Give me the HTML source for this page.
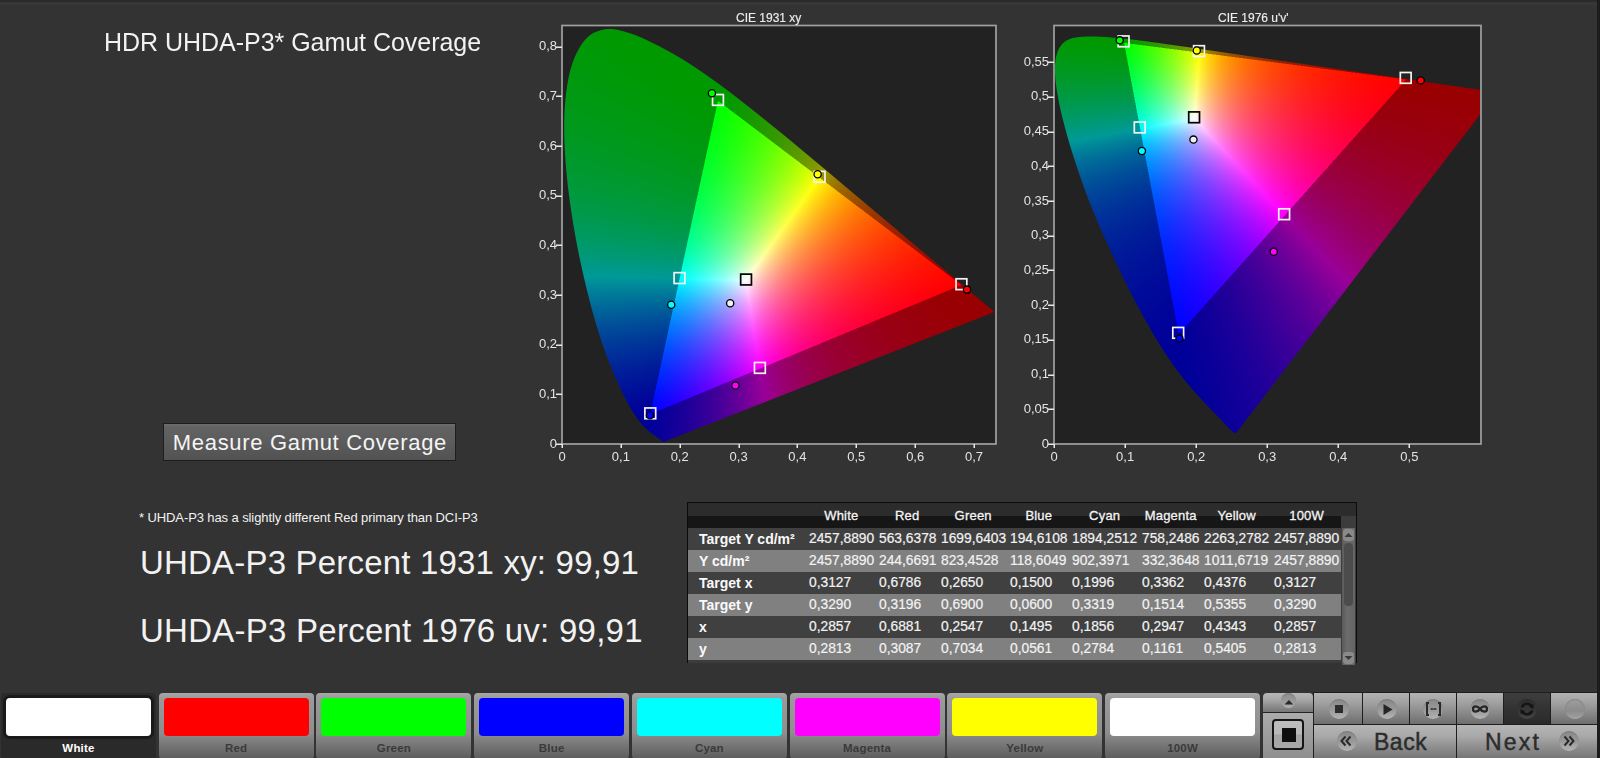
<!DOCTYPE html>
<html><head><meta charset="utf-8">
<style>
html,body{margin:0;padding:0;}
body{width:1600px;height:758px;overflow:hidden;background:#333333;position:relative;font-family:"Liberation Sans",sans-serif;color:#f2f2f2;}
.a{position:absolute;white-space:nowrap;}
#cv{position:absolute;left:0;top:0;}
.title{left:104px;top:26.5px;font-size:25px;line-height:30px;letter-spacing:-0.03px;}
.btn{left:163px;top:423px;width:291px;height:36px;border:1px solid #1e1e1e;background:linear-gradient(#6e6e6e 0px,#636363 3px,#5b5b5b 55%,#525252);}
.btn span{position:absolute;left:8.8px;top:6.8px;font-size:22px;line-height:24px;letter-spacing:0.68px;color:#f4f4f4;}
.note{left:139px;top:509.5px;font-size:13px;line-height:15px;letter-spacing:-0.1px;}
.big{left:140px;font-size:33px;line-height:36px;}
.ct{font-size:12px;line-height:14px;color:#ececec;-webkit-text-stroke:0.15px #ececec;}
.yl{font-size:13px;line-height:14px;color:#e4e4e4;text-align:right;width:40px;}
.xl{font-size:13px;line-height:14px;color:#e4e4e4;text-align:center;width:40px;}

.tbl{left:687px;top:502px;width:668px;height:160px;border:1px solid #0c0c0c;border-bottom:none;background:#3c3c3c;}
.thd1{position:absolute;left:0;top:0;width:668px;height:13px;background:#2c2c2c;}
.thd2{position:absolute;left:0;top:13px;width:653px;height:12px;background:#161616;}
.row{position:absolute;left:0;width:653px;height:22px;}
.rd{background:#404040;}
.rl{background:#808080;}
.hd{font-size:13px;line-height:16px;color:#f4f4f4;text-align:center;width:80px;letter-spacing:0.2px;-webkit-text-stroke:0.3px #f4f4f4;}
.cell{font-size:13.8px;line-height:22px;color:#f2f2f2;-webkit-text-stroke:0.2px #f2f2f2;}
.lab{font-size:14px;line-height:22px;color:#fafafa;font-weight:bold;left:11px;}
.sb{position:absolute;left:654px;top:25px;width:13px;height:137px;background:linear-gradient(90deg,#5a5a5a,#6c6c6c 40%,#646464);}
.sbu{position:absolute;left:1px;width:11px;height:12px;background:#8a8a8a;border-radius:3px;}
.sbt{position:absolute;left:2px;top:15px;width:9px;height:63px;background:#4c4c4c;border-radius:4px;}
.sw{top:693px;width:155px;height:66px;border-radius:4px;background:linear-gradient(#a6a6a6 0px,#9a9a9a 6px,#8e8e8e 40px,#7a7a7a 50px,#5c5c5c 66px);}
.sw .c{position:absolute;left:5px;top:5px;width:145px;height:38px;border-radius:4px;}
.sw .t{position:absolute;left:0;top:48px;width:155px;text-align:center;font-size:11.5px;line-height:14px;font-weight:bold;color:#3a3a3a;letter-spacing:0.2px;}
.sel{background:#2a2a2a;}
.sel .c{box-shadow:0 0 0 3px #1a1a1a;}
.sel .t{color:#ffffff;}

.cp{position:absolute;}
.g1{background:linear-gradient(#b2b2b2,#a2a2a2 30%,#8c8c8c 60%,#6e6e6e);}
.g2{background:linear-gradient(#b6b6b6,#a8a8a8 35%,#909090 65%,#767676);}
.g3{background:linear-gradient(#3e3e3e,#333333 50%,#2a2a2a);}
.ic{position:absolute;width:20px;height:20px;border-radius:50%;background:linear-gradient(#888 0%,#9a9a9a 55%,#b4b4b4 100%);box-shadow:inset 0 1px 1px rgba(0,0,0,0.12);}
.bt{position:absolute;font-size:23px;line-height:24px;color:#2c2c2c;-webkit-text-stroke:0.45px #2c2c2c;}
</style></head><body>
<canvas id="cv" width="1600" height="480"></canvas>
<div class="a" style="left:0;top:0;width:1600px;height:2px;background:#2a2a2a"></div><div class="a" style="left:0;top:2px;width:1600px;height:3px;background:#373737"></div>
<div class="a title">HDR UHDA-P3* Gamut Coverage</div>
<div class="a btn"><span>Measure Gamut Coverage</span></div>
<div class="a note">* UHDA-P3 has a slightly different Red primary than DCI-P3</div>
<div class="a big" style="top:544.5px;letter-spacing:0.19px">UHDA-P3 Percent 1931 xy: 99,91</div>
<div class="a big" style="top:613px;letter-spacing:0.25px">UHDA-P3 Percent 1976 uv: 99,91</div>
<div id="labels">
<div class="a ct" style="left:736px;top:11px">CIE 1931 xy</div>
<div class="a ct" style="left:1218px;top:11px">CIE 1976 u'v'</div>
<div class="a yl" style="left:517px;top:436.5px">0</div>
<div class="a yl" style="left:517px;top:386.9px">0,1</div>
<div class="a yl" style="left:517px;top:337.2px">0,2</div>
<div class="a yl" style="left:517px;top:287.6px">0,3</div>
<div class="a yl" style="left:517px;top:237.9px">0,4</div>
<div class="a yl" style="left:517px;top:188.2px">0,5</div>
<div class="a yl" style="left:517px;top:138.6px">0,6</div>
<div class="a yl" style="left:517px;top:89.0px">0,7</div>
<div class="a yl" style="left:517px;top:39.3px">0,8</div>
<div class="a xl" style="left:542.0px;top:450px">0</div>
<div class="a xl" style="left:600.9px;top:450px">0,1</div>
<div class="a xl" style="left:659.7px;top:450px">0,2</div>
<div class="a xl" style="left:718.6px;top:450px">0,3</div>
<div class="a xl" style="left:777.4px;top:450px">0,4</div>
<div class="a xl" style="left:836.3px;top:450px">0,5</div>
<div class="a xl" style="left:895.2px;top:450px">0,6</div>
<div class="a xl" style="left:954.0px;top:450px">0,7</div>
<div class="a yl" style="left:1009px;top:436.5px">0</div>
<div class="a yl" style="left:1009px;top:401.8px">0,05</div>
<div class="a yl" style="left:1009px;top:367.1px">0,1</div>
<div class="a yl" style="left:1009px;top:332.3px">0,15</div>
<div class="a yl" style="left:1009px;top:297.6px">0,2</div>
<div class="a yl" style="left:1009px;top:262.9px">0,25</div>
<div class="a yl" style="left:1009px;top:228.2px">0,3</div>
<div class="a yl" style="left:1009px;top:193.5px">0,35</div>
<div class="a yl" style="left:1009px;top:158.7px">0,4</div>
<div class="a yl" style="left:1009px;top:124.0px">0,45</div>
<div class="a yl" style="left:1009px;top:89.3px">0,5</div>
<div class="a yl" style="left:1009px;top:54.6px">0,55</div>
<div class="a xl" style="left:1034.0px;top:450px">0</div>
<div class="a xl" style="left:1105.1px;top:450px">0,1</div>
<div class="a xl" style="left:1176.2px;top:450px">0,2</div>
<div class="a xl" style="left:1247.2px;top:450px">0,3</div>
<div class="a xl" style="left:1318.3px;top:450px">0,4</div>
<div class="a xl" style="left:1389.4px;top:450px">0,5</div>
</div>
<div class="a tbl">
<div class="thd1"></div><div class="thd2"></div>
<div class="a hd" style="left:113.3px;top:5px">White</div>
<div class="a hd" style="left:179.2px;top:5px">Red</div>
<div class="a hd" style="left:245.2px;top:5px">Green</div>
<div class="a hd" style="left:310.8px;top:5px">Blue</div>
<div class="a hd" style="left:376.7px;top:5px">Cyan</div>
<div class="a hd" style="left:442.7px;top:5px">Magenta</div>
<div class="a hd" style="left:508.7px;top:5px">Yellow</div>
<div class="a hd" style="left:578.6px;top:5px">100W</div>
<div class="row rd" style="top:25px">
<div class="a lab" style="top:0">Target Y cd/m&sup2;</div>
<div class="a cell" style="left:121px;top:0">2457,8890</div>
<div class="a cell" style="left:191px;top:0">563,6378</div>
<div class="a cell" style="left:253px;top:0">1699,6403</div>
<div class="a cell" style="left:322px;top:0">194,6108</div>
<div class="a cell" style="left:384px;top:0">1894,2512</div>
<div class="a cell" style="left:454px;top:0">758,2486</div>
<div class="a cell" style="left:516px;top:0">2263,2782</div>
<div class="a cell" style="left:586px;top:0">2457,8890</div>
</div>
<div class="row rl" style="top:47px">
<div class="a lab" style="top:0">Y cd/m&sup2;</div>
<div class="a cell" style="left:121px;top:0">2457,8890</div>
<div class="a cell" style="left:191px;top:0">244,6691</div>
<div class="a cell" style="left:253px;top:0">823,4528</div>
<div class="a cell" style="left:322px;top:0">118,6049</div>
<div class="a cell" style="left:384px;top:0">902,3971</div>
<div class="a cell" style="left:454px;top:0">332,3648</div>
<div class="a cell" style="left:516px;top:0">1011,6719</div>
<div class="a cell" style="left:586px;top:0">2457,8890</div>
</div>
<div class="row rd" style="top:69px">
<div class="a lab" style="top:0">Target x</div>
<div class="a cell" style="left:121px;top:0">0,3127</div>
<div class="a cell" style="left:191px;top:0">0,6786</div>
<div class="a cell" style="left:253px;top:0">0,2650</div>
<div class="a cell" style="left:322px;top:0">0,1500</div>
<div class="a cell" style="left:384px;top:0">0,1996</div>
<div class="a cell" style="left:454px;top:0">0,3362</div>
<div class="a cell" style="left:516px;top:0">0,4376</div>
<div class="a cell" style="left:586px;top:0">0,3127</div>
</div>
<div class="row rl" style="top:91px">
<div class="a lab" style="top:0">Target y</div>
<div class="a cell" style="left:121px;top:0">0,3290</div>
<div class="a cell" style="left:191px;top:0">0,3196</div>
<div class="a cell" style="left:253px;top:0">0,6900</div>
<div class="a cell" style="left:322px;top:0">0,0600</div>
<div class="a cell" style="left:384px;top:0">0,3319</div>
<div class="a cell" style="left:454px;top:0">0,1514</div>
<div class="a cell" style="left:516px;top:0">0,5355</div>
<div class="a cell" style="left:586px;top:0">0,3290</div>
</div>
<div class="row rd" style="top:113px">
<div class="a lab" style="top:0">x</div>
<div class="a cell" style="left:121px;top:0">0,2857</div>
<div class="a cell" style="left:191px;top:0">0,6881</div>
<div class="a cell" style="left:253px;top:0">0,2547</div>
<div class="a cell" style="left:322px;top:0">0,1495</div>
<div class="a cell" style="left:384px;top:0">0,1856</div>
<div class="a cell" style="left:454px;top:0">0,2947</div>
<div class="a cell" style="left:516px;top:0">0,4343</div>
<div class="a cell" style="left:586px;top:0">0,2857</div>
</div>
<div class="row rl" style="top:135px">
<div class="a lab" style="top:0">y</div>
<div class="a cell" style="left:121px;top:0">0,2813</div>
<div class="a cell" style="left:191px;top:0">0,3087</div>
<div class="a cell" style="left:253px;top:0">0,7034</div>
<div class="a cell" style="left:322px;top:0">0,0561</div>
<div class="a cell" style="left:384px;top:0">0,2784</div>
<div class="a cell" style="left:454px;top:0">0,1161</div>
<div class="a cell" style="left:516px;top:0">0,5405</div>
<div class="a cell" style="left:586px;top:0">0,2813</div>
</div>
<div class="sb"><div class="sbu" style="top:1px"><svg width="11" height="12" style="position:absolute;left:0;top:0"><path d="M1.5 8 L5.5 4 L9.5 8 Z" fill="#3a3a3a"/></svg></div><div class="sbt"></div><div class="sbu" style="top:124px"><svg width="11" height="12" style="position:absolute;left:0;top:0"><path d="M1.5 4 L5.5 8 L9.5 4 Z" fill="#3a3a3a"/></svg></div></div>
</div>
<div class="a sw sel" style="left:1.0px"><div class="c" style="background:#ffffff"></div><div class="t">White</div></div>
<div class="a sw" style="left:158.7px"><div class="c" style="background:#ff0000"></div><div class="t">Red</div></div>
<div class="a sw" style="left:316.4px"><div class="c" style="background:#00ff00"></div><div class="t">Green</div></div>
<div class="a sw" style="left:474.2px"><div class="c" style="background:#0000ff"></div><div class="t">Blue</div></div>
<div class="a sw" style="left:631.9px"><div class="c" style="background:#00ffff"></div><div class="t">Cyan</div></div>
<div class="a sw" style="left:789.6px"><div class="c" style="background:#ff00ff"></div><div class="t">Magenta</div></div>
<div class="a sw" style="left:947.3px"><div class="c" style="background:#ffff00"></div><div class="t">Yellow</div></div>
<div class="a sw" style="left:1105.1px"><div class="c" style="background:#ffffff"></div><div class="t">100W</div></div>
<div class="cp" style="left:1263px;top:693px;width:50px;height:65px;background:#222;border-radius:4px 4px 0 0"></div>
<div class="cp g2" style="left:1263px;top:693px;width:50px;height:19px;border-radius:4px 4px 0 0"></div>
<div class="ic" style="left:1281px;top:693px;width:15px;height:15px;background:linear-gradient(#8a8a8a,#9c9c9c 60%,#b0b0b0)"></div>
<svg class="cp" style="left:1283px;top:699px" width="12" height="7"><path d="M1.5 5.5 L5.9 1 L10.3 5.5 Z" fill="#2a2a2a"/></svg>
<div class="cp g2" style="left:1263px;top:713px;width:50px;height:45px;background:linear-gradient(#acacac,#a0a0a0 40%,#8e8e8e)"></div>
<div class="cp" style="left:1272px;top:719px;width:28px;height:27px;border:2px solid #151515;border-radius:4px;background:linear-gradient(#bdbdbd 0%,#b8b8b8 48%,#a4a4a4 52%,#a8a8a8 100%)"></div>
<div class="cp" style="left:1282px;top:728px;width:14px;height:14px;background:#0e0e0e"></div>
<div class="cp" style="left:1313px;top:692px;width:287px;height:66px;background:#1e1e1e"></div>
<div class="cp g1" style="left:1314px;top:693px;width:48px;height:31px"></div>
<div class="cp g1" style="left:1363px;top:693px;width:46px;height:31px"></div>
<div class="cp g1" style="left:1410px;top:693px;width:46px;height:31px"></div>
<div class="cp g1" style="left:1457px;top:693px;width:46px;height:31px"></div>
<div class="cp g3" style="left:1504px;top:693px;width:46px;height:31px"></div>
<div class="cp g1" style="left:1551px;top:693px;width:47px;height:31px"></div>
<div class="cp g2" style="left:1314px;top:725px;width:142px;height:33px"></div>
<div class="cp g2" style="left:1457px;top:725px;width:141px;height:33px"></div>
<div class="cp" style="left:1597px;top:0px;width:3px;height:758px;background:#1c1c1c"></div>
<div class="ic" style="left:1329.0px;top:699px"></div>
<div class="ic" style="left:1376.5px;top:699px"></div>
<div class="ic" style="left:1423.0px;top:699px"></div>
<div class="ic" style="left:1470.0px;top:699px"></div>
<div class="ic" style="left:1517.0px;top:699px;background:linear-gradient(#2e2e2e,#363636 60%,#444)"></div>
<div class="ic" style="left:1565.0px;top:699px"></div>
<div class="cp" style="left:1335px;top:705px;width:8px;height:8px;background:#2c2c2c"></div>
<svg class="cp" style="left:1382px;top:703px" width="12" height="13"><path d="M1.5 1 L10.5 6.5 L1.5 12 Z" fill="#262626"/></svg>
<svg class="cp" style="left:1425px;top:701px" width="17" height="16"><path d="M4 2 H2 V14 H4 M13 2 H15 V14 H13" stroke="#2a2a2a" stroke-width="2" fill="none"/><path d="M6 8 H11" stroke="#3a3a3a" stroke-width="1.4"/><circle cx="6.5" cy="8" r="1" fill="#3a3a3a"/><circle cx="10.5" cy="8" r="1" fill="#3a3a3a"/></svg>
<svg class="cp" style="left:1471px;top:704px" width="18" height="10"><path d="M9 5 C6.5 1.5 2 1.5 2 5 C2 8.5 6.5 8.5 9 5 C11.5 1.5 16 1.5 16 5 C16 8.5 11.5 8.5 9 5 Z" stroke="#262626" stroke-width="2.2" fill="none"/></svg>
<svg class="cp" style="left:1518px;top:700px" width="18" height="18"><path d="M14 7 A5.5 5.5 0 0 0 3.8 7.5" stroke="#151515" stroke-width="2.6" fill="none"/><path d="M4 11 A5.5 5.5 0 0 0 14.2 10.5" stroke="#151515" stroke-width="2.6" fill="none"/><path d="M11 6.5 L15.5 9 L15.5 4 Z" fill="#151515"/><path d="M7 11.5 L2.5 9 L2.5 14 Z" fill="#151515"/></svg>
<div class="ic" style="left:1565px;top:699px;background:linear-gradient(#9e9e9e,#8c8c8c 60%,#a2a2a2)"></div>
<div class="ic" style="left:1336.5px;top:731px"></div>
<svg class="cp" style="left:1339px;top:734px" width="15" height="14"><path d="M6.5 2.5 L2.5 7 L6.5 11.5 M11.5 2.5 L7.5 7 L11.5 11.5" stroke="#2a2a2a" stroke-width="2" fill="none"/></svg>
<div class="bt" style="left:1374px;top:730px;letter-spacing:0.5px">Back</div>
<div class="bt" style="left:1485px;top:730px;letter-spacing:2.2px">Next</div>
<div class="ic" style="left:1558.5px;top:731px"></div>
<svg class="cp" style="left:1561px;top:734px" width="15" height="14"><path d="M3.5 2.5 L7.5 7 L3.5 11.5 M8.5 2.5 L12.5 7 L8.5 11.5" stroke="#2a2a2a" stroke-width="2" fill="none"/></svg>
<script>
(function(){
var cv=document.getElementById('cv');var ctx=cv.getContext('2d');
// spectral locus CIE1931 2deg 380..700 step 5
var L=[[0.1741,0.0050],[0.1740,0.0050],[0.1738,0.0049],[0.1736,0.0049],[0.1733,0.0048],[0.1730,0.0048],[0.1726,0.0048],[0.1721,0.0048],[0.1714,0.0051],[0.1703,0.0058],[0.1689,0.0069],[0.1669,0.0086],[0.1644,0.0109],[0.1611,0.0138],[0.1566,0.0177],[0.1510,0.0227],[0.1440,0.0297],[0.1355,0.0399],[0.1241,0.0578],[0.1096,0.0868],[0.0913,0.1327],[0.0687,0.2007],[0.0454,0.2950],[0.0235,0.4127],[0.0082,0.5384],[0.0039,0.6548],[0.0139,0.7502],[0.0389,0.8120],[0.0743,0.8338],[0.1142,0.8262],[0.1547,0.8059],[0.1929,0.7816],[0.2296,0.7543],[0.2658,0.7243],[0.3016,0.6923],[0.3373,0.6589],[0.3731,0.6245],[0.4087,0.5896],[0.4441,0.5547],[0.4788,0.5202],[0.5125,0.4866],[0.5448,0.4544],[0.5752,0.4242],[0.6029,0.3965],[0.6270,0.3725],[0.6482,0.3514],[0.6658,0.3340],[0.6801,0.3197],[0.6915,0.3083],[0.7006,0.2993],[0.7079,0.2920],[0.7140,0.2859],[0.7190,0.2809],[0.7230,0.2770],[0.7260,0.2740],[0.7283,0.2717],[0.7300,0.2700],[0.7311,0.2689],[0.7320,0.2680],[0.7327,0.2673],[0.7334,0.2666],[0.7340,0.2660],[0.7344,0.2656],[0.7346,0.2654],[0.7347,0.2653]];
var P={r:[0.6786,0.3196],g:[0.265,0.69],b:[0.15,0.06],w:[0.3127,0.329]};
function xyz(c){return [c[0]/c[1],1,(1-c[0]-c[1])/c[1]];}
function inv3(m){var a=m[0][0],b=m[0][1],c=m[0][2],d=m[1][0],e=m[1][1],f=m[1][2],g=m[2][0],h=m[2][1],i=m[2][2];
 var A=e*i-f*h,B=-(d*i-f*g),C=d*h-e*g,det=a*A+b*B+c*C;
 return [[A/det,-(b*i-c*h)/det,(b*f-c*e)/det],[B/det,(a*i-c*g)/det,-(a*f-c*d)/det],[C/det,-(a*h-b*g)/det,(a*e-b*d)/det]];}
var R=xyz(P.r),G=xyz(P.g),B=xyz(P.b),W=xyz(P.w);
var M0=[[R[0],G[0],B[0]],[R[1],G[1],B[1]],[R[2],G[2],B[2]]];
var Mi0=inv3(M0);
var S=[Mi0[0][0]*W[0]+Mi0[0][1]*W[1]+Mi0[0][2]*W[2],Mi0[1][0]*W[0]+Mi0[1][1]*W[1]+Mi0[1][2]*W[2],Mi0[2][0]*W[0]+Mi0[2][1]*W[1]+Mi0[2][2]*W[2]];
var M=[[R[0]*S[0],G[0]*S[1],B[0]*S[2]],[R[1]*S[0],G[1]*S[1],B[1]*S[2]],[R[2]*S[0],G[2]*S[1],B[2]*S[2]]];
var Mi=inv3(M);
function gam(v){return v<=0.0031308?12.92*v:1.055*Math.pow(v,1/2.4)-0.055;}
var DARK=0.6;function GF(v){return v;}
function col(x,y,out){
 var X=x/y,Y=1,Z=(1-x-y)/y;
 var r=Mi[0][0]*X+Mi[0][1]*Y+Mi[0][2]*Z,g=Mi[1][0]*X+Mi[1][1]*Y+Mi[1][2]*Z,b=Mi[2][0]*X+Mi[2][1]*Y+Mi[2][2]*Z;
 var k=1;
 if(r<0||g<0||b<0){k=DARK;if(r<0)r=0;if(g<0)g=0;if(b<0)b=0;}
 var m=Math.max(r,g,b);if(m<=0)m=1;
 var pw=k<1?1.2:1.1;out[0]=Math.pow(r/m,pw)*255*k;out[1]=Math.pow(g/m,pw)*255*k;out[2]=Math.pow(b/m,pw)*255*k;
}
function locusPath(c,o,dx,dy){
 var pts=[];for(var k=0;k<L.length;k++){var q=o.map(L[k][0],L[k][1]);pts.push([q[0]-dx,q[1]-dy]);}
 c.beginPath();c.moveTo(pts[0][0],pts[0][1]);
 for(var k=0;k<pts.length-1;k++){var p0=pts[Math.max(0,k-1)],p1=pts[k],p2=pts[k+1],p3=pts[Math.min(pts.length-1,k+2)];
  c.bezierCurveTo(p1[0]+(p2[0]-p0[0])/6,p1[1]+(p2[1]-p0[1])/6,p2[0]-(p3[0]-p1[0])/6,p2[1]-(p3[1]-p1[1])/6,p2[0],p2[1]);}
 c.closePath();
}
function chart(o){
 // o: x0,y0,x1,y1 frame; map(u,v)->px; inv(px,py)->xy; locus transform
 var w=o.x1-o.x0,h=o.y1-o.y0,SS=2,W2=w*SS,H2=h*SS;
 var off=document.createElement('canvas');off.width=W2;off.height=H2;
 var oc=off.getContext('2d');var id=oc.createImageData(W2,H2);var d=id.data;var c=[0,0,0];
 for(var j=0;j<H2;j++){for(var i=0;i<W2;i++){
   var xy=o.inv(o.x0+(i+0.5)/SS,o.y0+(j+0.5)/SS);var p=(j*W2+i)*4;
   if(xy[1]<=0.0001){d[p+3]=0;continue;}
   col(xy[0],xy[1],c);d[p]=c[0];d[p+1]=c[1];d[p+2]=c[2];d[p+3]=255;}}
 oc.putImageData(id,0,0);
 // mask by locus
 oc.globalCompositeOperation='destination-in';
 oc.save();oc.scale(SS,SS);locusPath(oc,o,o.x0,o.y0);oc.fillStyle='#000';oc.fill();oc.restore();
 ctx.fillStyle='#222222';ctx.fillRect(o.x0,o.y0,w,h);
 ctx.imageSmoothingEnabled=true;ctx.imageSmoothingQuality='high';
 ctx.drawImage(off,o.x0,o.y0,w,h);
 // frame
 ctx.strokeStyle='#a0a0a0';ctx.lineWidth=1.7;
 ctx.strokeRect(o.x0-1,o.y0-0.5,w+2,h+1.5);
 ctx.fillStyle='#e8e8e8';
 for(var k=0;k<o.xt.length;k++){var px=Math.round(o.xp(o.xt[k]));ctx.fillRect(px-0.5,o.y1+1,1.5,4);}
 for(var k=0;k<o.yt.length;k++){var py=Math.round(o.yp(o.yt[k]));ctx.fillRect(o.x0-7,py-0.5,6,1.5);}
 var T=[[0.3127,0.329],[0.6786,0.3196],[0.265,0.69],[0.15,0.06],[0.1996,0.3319],[0.3362,0.1514],[0.4376,0.5355]];
 var Ms=[[0.2857,0.2813,'#f0f0f0'],[0.6881,0.3087,'#ff0000'],[0.2547,0.7034,'#00ff00'],[0.1495,0.0561,'#0000ff'],[0.1856,0.2784,'#00ffff'],[0.2947,0.1161,'#ff00ff'],[0.4343,0.5405,'#ffff00']];
 ctx.save();ctx.beginPath();ctx.rect(o.x0,o.y0,w,h);ctx.clip();
 for(var k=0;k<T.length;k++){var q=o.map(T[k][0],T[k][1]);q=[q[0]+o.mo[0],q[1]+o.mo[1]];ctx.strokeStyle=k==0?'#000':'#f4f4f4';ctx.lineWidth=1.7;ctx.strokeRect(q[0]-5.4,q[1]-5.4,10.8,10.8);}
 for(var k=0;k<Ms.length;k++){var q=o.map(Ms[k][0],Ms[k][1]);q=[q[0]+o.mo[0],q[1]+o.mo[1]];ctx.beginPath();ctx.arc(q[0],q[1],3.6,0,Math.PI*2);ctx.fillStyle=Ms[k][2];ctx.fill();ctx.strokeStyle='#000';ctx.lineWidth=1.3;ctx.stroke();}
 ctx.restore();
}
// chart1
var c1={x0:563,y0:26,x1:995,y1:443,mo:[0,-0.8],
 map:function(x,y){return [562+x*588.6,444-y*497.5];},
 inv:function(px,py){return [(px-562)/588.6,(444-py)/497.5];},
 xp:function(v){return 562+v*588.6;},yp:function(v){return 444-v*496.5;},xt:[0,0.1,0.2,0.3,0.4,0.5,0.6,0.7],yt:[0,0.1,0.2,0.3,0.4,0.5,0.6,0.7,0.8]};
function uv2xy(u,v){var d=6*u-16*v+12;return [9*u/d,4*v/d];}
function xy2uv(x,y){var d=-2*x+12*y+3;return [4*x/d,9*y/d];}
var c2={x0:1055,y0:26,x1:1480,y1:443,mo:[-0.5,-1.5],
 map:function(x,y){var q=xy2uv(x,y);return [1054+q[0]*710.8,444-q[1]*694.4];},
 inv:function(px,py){return uv2xy((px-1054)/710.8,(444-py)/694.4);},
 xp:function(v){return 1054+v*710.8;},yp:function(v){return 444-v*694.4;},xt:[0,0.1,0.2,0.3,0.4,0.5],yt:[0,0.05,0.1,0.15,0.2,0.25,0.3,0.35,0.4,0.45,0.5,0.55]};
chart(c1);chart(c2);
})();
</script>
</body></html>
